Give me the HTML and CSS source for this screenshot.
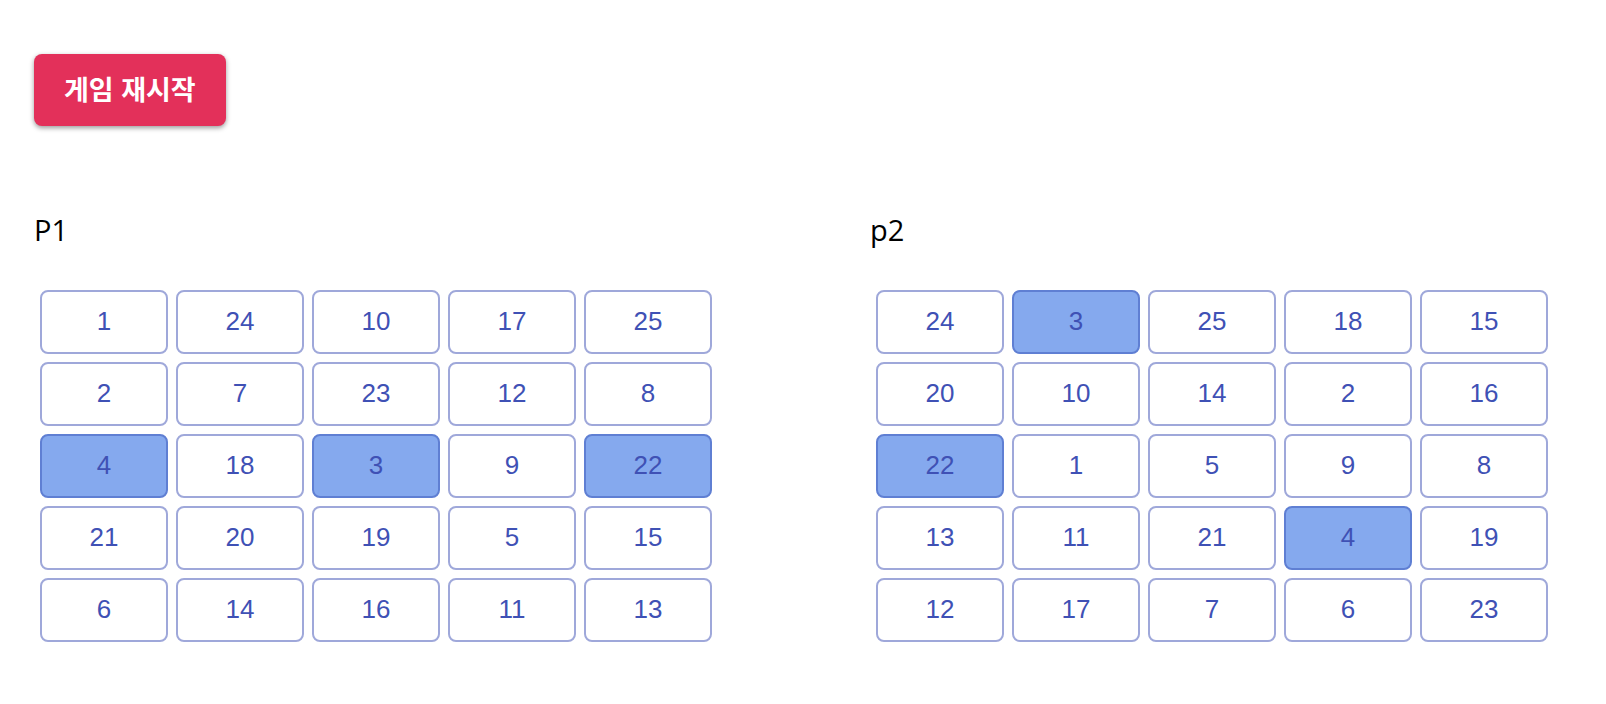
FILE: index.html
```
<!DOCTYPE html>
<html lang="ko">
<head>
<meta charset="utf-8">
<title>Bingo</title>
<link rel="stylesheet" href="styles.css">
</head>
<body>
<main class="game">
  <button type="button" class="restart">게임 재시작</button>
  <div class="players">
    <section class="player">
      <h2 class="name">P1</h2>
      <div class="board">
        <button type="button" class="cell">1</button>
        <button type="button" class="cell">24</button>
        <button type="button" class="cell">10</button>
        <button type="button" class="cell">17</button>
        <button type="button" class="cell">25</button>
        <button type="button" class="cell">2</button>
        <button type="button" class="cell">7</button>
        <button type="button" class="cell">23</button>
        <button type="button" class="cell">12</button>
        <button type="button" class="cell">8</button>
        <button type="button" class="cell marked">4</button>
        <button type="button" class="cell">18</button>
        <button type="button" class="cell marked">3</button>
        <button type="button" class="cell">9</button>
        <button type="button" class="cell marked">22</button>
        <button type="button" class="cell">21</button>
        <button type="button" class="cell">20</button>
        <button type="button" class="cell">19</button>
        <button type="button" class="cell">5</button>
        <button type="button" class="cell">15</button>
        <button type="button" class="cell">6</button>
        <button type="button" class="cell">14</button>
        <button type="button" class="cell">16</button>
        <button type="button" class="cell">11</button>
        <button type="button" class="cell">13</button>
      </div>
    </section>
    <section class="player">
      <h2 class="name">p2</h2>
      <div class="board">
        <button type="button" class="cell">24</button>
        <button type="button" class="cell marked">3</button>
        <button type="button" class="cell">25</button>
        <button type="button" class="cell">18</button>
        <button type="button" class="cell">15</button>
        <button type="button" class="cell">20</button>
        <button type="button" class="cell">10</button>
        <button type="button" class="cell">14</button>
        <button type="button" class="cell">2</button>
        <button type="button" class="cell">16</button>
        <button type="button" class="cell marked">22</button>
        <button type="button" class="cell">1</button>
        <button type="button" class="cell">5</button>
        <button type="button" class="cell">9</button>
        <button type="button" class="cell">8</button>
        <button type="button" class="cell">13</button>
        <button type="button" class="cell">11</button>
        <button type="button" class="cell">21</button>
        <button type="button" class="cell marked">4</button>
        <button type="button" class="cell">19</button>
        <button type="button" class="cell">12</button>
        <button type="button" class="cell">17</button>
        <button type="button" class="cell">7</button>
        <button type="button" class="cell">6</button>
        <button type="button" class="cell">23</button>
      </div>
    </section>
  </div>
</main>
</body>
</html>
```
FILE: styles.css
```
* {
  box-sizing: border-box;
}

body {
  margin: 0;
  background: #fff;
  color: #000;
  font-family: "Open Sans", "Noto Sans CJK KR", sans-serif;
}

.game {
  padding: 54px 34px;
}

.restart {
  display: block;
  padding: 17px 30px 15px;
  border: 0;
  border-radius: 8px;
  background: #e3305a;
  color: #fff;
  font: 700 27px/40px "Liberation Sans", "Noto Sans CJK KR", sans-serif;
  box-shadow: 0 2px 5px rgba(0, 0, 0, 0.4);
  cursor: pointer;
}

.players {
  display: flex;
  gap: 164px;
  margin-top: 80px;
}

.name {
  margin: 0 0 36px;
  font-size: 29px;
  font-weight: 400;
  line-height: 48px;
}

.board {
  display: grid;
  grid-template-columns: repeat(5, 128px);
  gap: 8px;
  margin-left: 6px;
  margin-right: -6px;
}

.player {
  flex: 0 0 auto;
}

.cell {
  height: 64px;
  padding: 0 0 2px;
  border: 2px solid #9fa8da;
  border-radius: 8px;
  background: #fff;
  color: #3f51b5;
  font: 26px/32px "Liberation Sans", Arial, sans-serif;
  cursor: pointer;
}

.marked {
  border-color: #5f7fd3;
  background: #85a9ee;
}
```
